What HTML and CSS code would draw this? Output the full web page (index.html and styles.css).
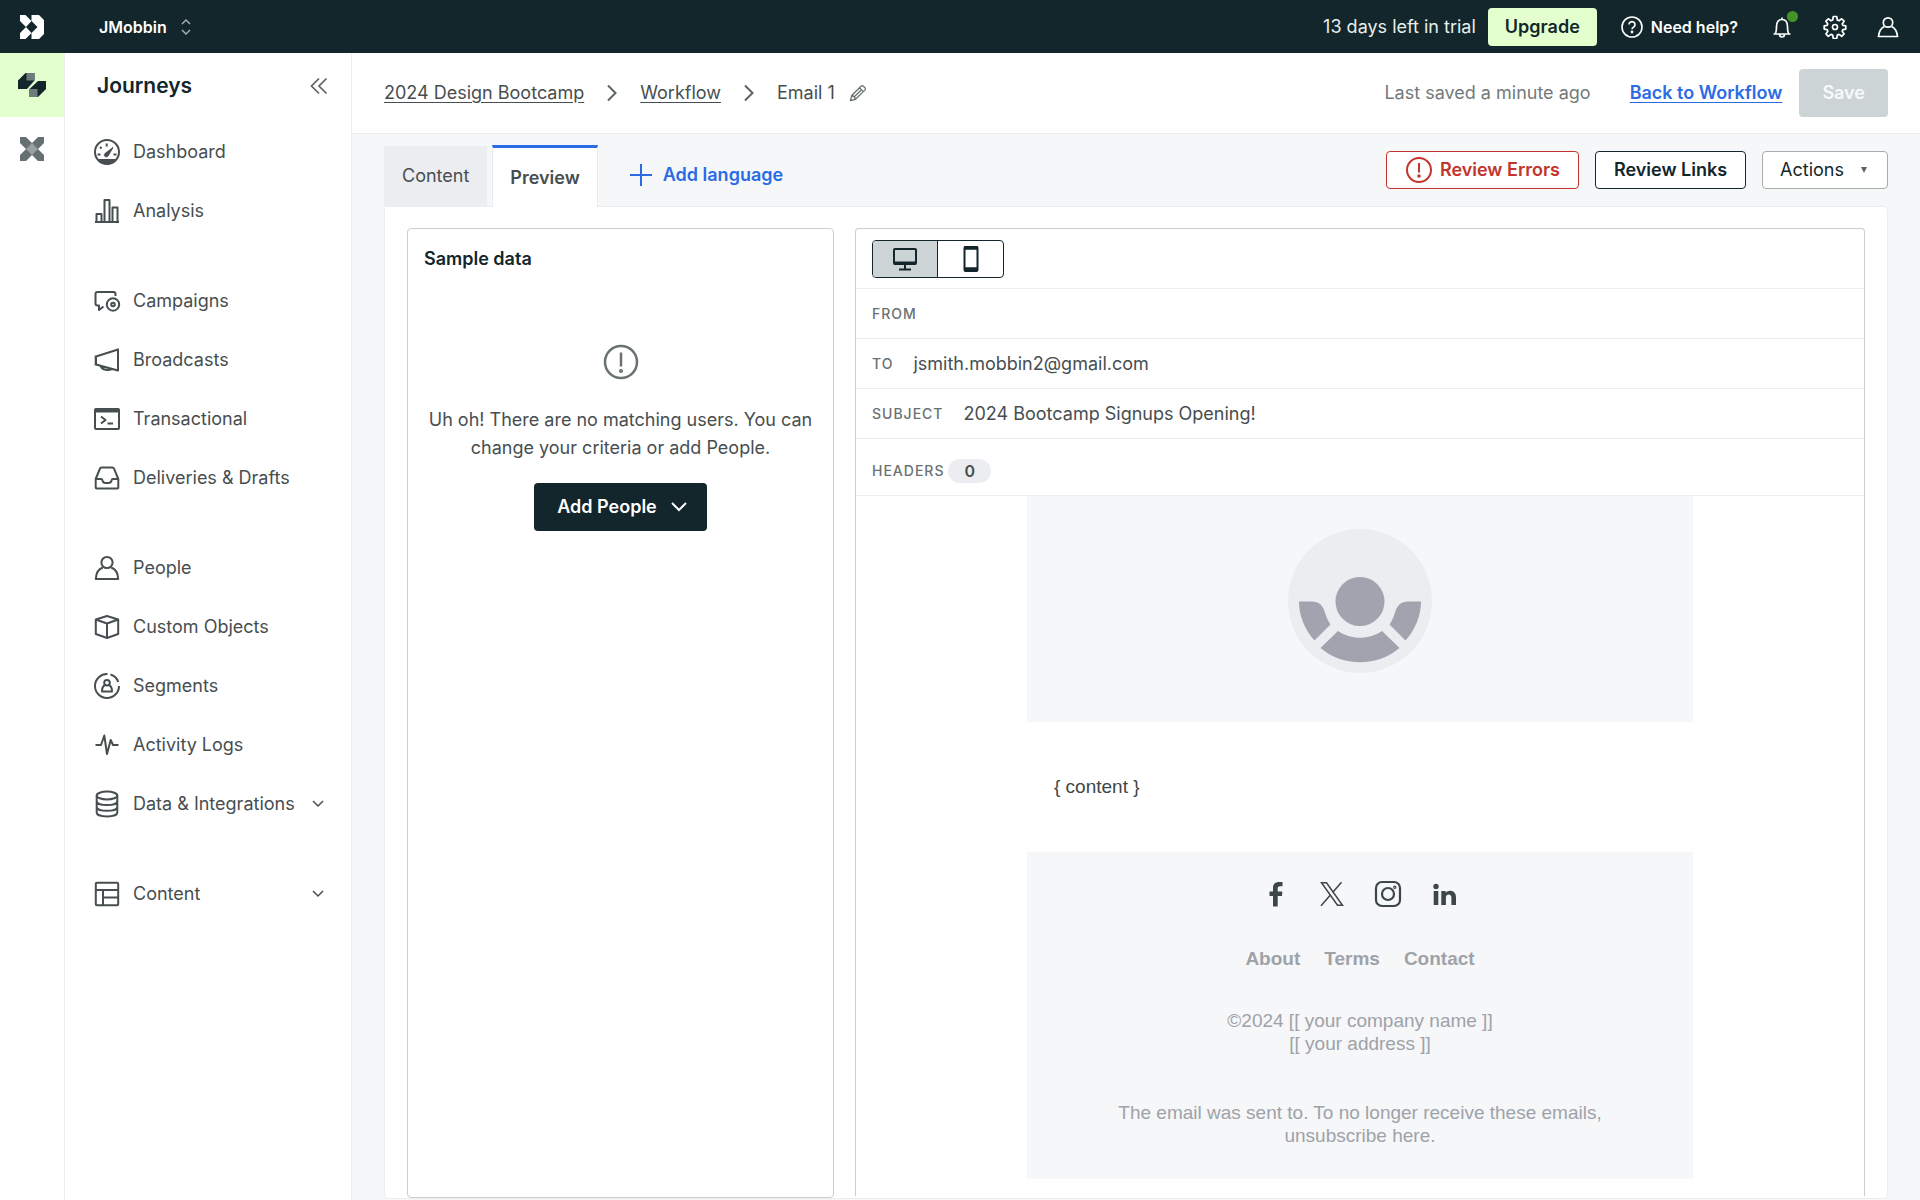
FILE: index.html
```html
<!DOCTYPE html>
<html lang="en">
<head>
    <meta charset="UTF-8">
    <meta name="viewport" content="width=device-width, initial-scale=1.0">
    <title>Email 1 - Preview</title>
    <link rel="stylesheet" href="styles.css">
</head>
<body>
    <header class="topbar">
        <a class="brand" href="#" aria-label="Home">
            <svg width="26" height="26" viewBox="0 0 26 26" fill="#fff">
                <path d="M1 1h5.500l6 6-5.500 6L1 7zM1 25h5.500l6-6-5.500-6L1 19zM12.500 1H20l5 5v14l-5 5h-7.500v-6l6-6-6-6z"/>
            </svg>
        </a>
        <button class="workspace">JMobbin
            <svg width="10" height="18" viewBox="0 0 10 18" fill="none" stroke="#a9b4b5" stroke-width="1.4"><path d="M1 6l4-4 4 4M1 12l4 4 4-4"/></svg>
        </button>
        <span class="trial">13 days left in trial</span>
        <button class="upgrade">Upgrade</button>
        <button class="help">
            <svg width="24" height="24" viewBox="0 0 24 24" fill="none" stroke="#fff" stroke-width="1.6"><circle cx="12" cy="12" r="10"/><path d="M9 9.600a3 3 0 1 1 4.500 2.600c-1.100.6-1.500 1-1.500 2"/><circle cx="12" cy="17" r=".6" fill="#fff"/></svg>
            Need help?
        </button>
        <button class="icon-btn bell" aria-label="Notifications">
            <svg width="24" height="24" viewBox="0 0 24 24" fill="none" stroke="#fff" stroke-width="1.7" stroke-linejoin="round"><path d="M3.500 19h17M5 19c1.200-1.500 1.500-3 1.500-7.500C6.500 7 8.500 4.500 12 4.500s5.500 2.500 5.500 7c0 4.500.3 6 1.500 7.500M12 4.500V2.500M9.500 19c0 4 5 4 5 0"/></svg>
            <span class="dot"></span>
        </button>
        <button class="icon-btn" aria-label="Settings">
            <svg width="24" height="24" viewBox="0 0 24 24" fill="none" stroke="#fff" stroke-width="1.7" stroke-linejoin="round"><circle cx="12" cy="12" r="2.500"/><path d="M10.300 1.500h3.400l.6 3.500 1.700.7 2.700-1.900 2.400 2.400-1.900 2.700.7 1.500 2.900.5v3.200l-2.900.6-.7 1.500 1.900 2.700-2.400 2.400-2.700-1.900-1.700.7-.6 3.400h-3.400l-.6-3.400-1.700-.7-2.700 1.900-2.400-2.400 1.900-2.700-.7-1.500-2.900-.6v-3.200l2.900-.5.7-1.500-1.900-2.700 2.400-2.400L8 5.700 9.700 5z"/></svg>
        </button>
        <button class="icon-btn" aria-label="Account">
            <svg width="24" height="24" viewBox="0 0 24 24" fill="none" stroke="#fff" stroke-width="1.7" stroke-linejoin="round"><circle cx="12" cy="7.500" r="4.700"/><path d="M8.500 11.500C5 13 3 16.500 2.500 21.500h19c-.5-5-2.500-8.500-6-10"/></svg>
        </button>
    </header>

    <div class="layout">
        <nav class="rail" aria-label="Products">
            <a class="rail-item active" href="#" aria-label="Journeys">
                <svg width="28" height="26" viewBox="0 0 28 26"><path fill="#12262b" d="M7.500 1h9v7.500L9 17H0V8.500zM20 9h8v8l-8 8h-9v-7.500z"/><path fill="#6f7c7c" d="M8.500 1h8v7.500h-8zM11 17h8.500v8H11z"/></svg>
            </a>
            <a class="rail-item" href="#" aria-label="Data Pipelines">
                <svg width="26" height="26" viewBox="0 0 26 26"><path fill="#667070" d="M1 1h6l6 6 6-6h6v6l-6 6 6 6v6h-6l-6-6-6 6H1v-6l6-6-6-6z"/><path fill="#98a0a0" d="M13 7l6 6-6 6-6-6z"/></svg>
            </a>
        </nav>

        <aside class="sidebar">
            <div class="sidebar-head">
                <h1>Journeys</h1>
                <button class="collapse" aria-label="Collapse menu">
                    <svg width="18" height="18" viewBox="0 0 18 18" fill="none" stroke="#5c6465" stroke-width="1.7"><path d="M9 1.500L1.500 9 9 16.500M16.500 1.500L9 9l7.500 7.500"/></svg>
                </button>
            </div>
            <ul class="menu">
                <li><a href="#">
                    <svg class="ico" viewBox="0 0 28 28"><circle cx="14" cy="14" r="12"/><path class="solid" d="M4.500 21.500h19c-4.500 6-14.500 6-19 0z"/><path class="solid" d="M12 15.500l8-6-5 8.500c-2 2-5 0-3-2.500z"/><path d="M13.700 5.500v3M7 9l1.500 1.500M4.500 16.500h3M20.500 16.500h3"/></svg>
                    Dashboard</a></li>
                <li><a href="#">
                    <svg class="ico" viewBox="0 0 28 28"><path d="M2 25h24M3.500 25v-8h5v8M11.500 25V3h5v22M19.500 25V10.500h5V25"/></svg>
                    Analysis</a></li>
            </ul>
            <ul class="menu">
                <li><a href="#">
                    <svg class="ico" viewBox="0 0 28 28"><path d="M22.500 9V7a2 2 0 0 0-2-2h-16a2 2 0 0 0-2 2v9.500a2 2 0 0 0 2 2h1.500V23l4.500-3.500"/><circle cx="20" cy="17.500" r="6.200"/><circle cx="20" cy="17.500" r="1.800"/></svg>
                    Campaigns</a></li>
                <li><a href="#">
                    <svg class="ico" viewBox="0 0 28 28"><path d="M3 10.500L25 3.500v21L3 18.500zM7.500 20c2 4.500 8 4.500 11.500 3M2.700 9.500v10M25 2.500v22.500"/></svg>
                    Broadcasts</a></li>
                <li><a href="#">
                    <svg class="ico" viewBox="0 0 28 28"><rect x="2" y="4" width="24" height="20" rx="1"/><path class="solid" d="M2 4h24v3H2z"/><path d="M8 11.500l4.500 3.500L8 18.500M14.500 18.500H20"/></svg>
                    Transactional</a></li>
                <li><a href="#">
                    <svg class="ico" viewBox="0 0 28 28"><path d="M2.700 15L7 4.500q.4-1 1.500-1h11q1.100 0 1.500 1L25.300 15v8.500q0 1-1 1H3.700q-1 0-1-1zM2.700 15H8q1.200 0 1.500 1.500.6 2.500 3 2.500h3q2.400 0 3-2.500.3-1.500 1.500-1.500h5.300"/></svg>
                    Deliveries &amp; Drafts</a></li>
            </ul>
            <ul class="menu">
                <li><a href="#">
                    <svg class="ico" viewBox="0 0 28 28"><circle cx="14" cy="8.500" r="5.600"/><path d="M9.800 13.500C5.500 15 3 19 2.800 25h22.400c-.2-6-2.700-10-7-11.500"/></svg>
                    People</a></li>
                <li><a href="#">
                    <svg class="ico" viewBox="0 0 28 28"><path d="M14 3l11.200 3.500V21L14 25 2.800 21V6.500zM2.800 6.500L14 10.500l11.200-4M14 10.500V25"/></svg>
                    Custom Objects</a></li>
                <li><a href="#">
                    <svg class="ico" viewBox="0 0 28 28"><path d="M14.500 2A12 12 0 1 0 26 14M17.500 2.500A12 12 0 0 1 25.300 10"/><circle cx="14" cy="10.800" r="2.800"/><path d="M12 13c-2 1-3 3-3 6.500h10c0-3.500-1-5.500-3-6.500"/></svg>
                    Segments</a></li>
                <li><a href="#">
                    <svg class="ico" viewBox="0 0 28 28"><path d="M2.500 14H8l3.300-9.500L14 23l3.700-14 2.300 5h5.500"/></svg>
                    Activity Logs</a></li>
                <li><a href="#">
                    <svg class="ico" viewBox="0 0 28 28"><ellipse cx="14" cy="5.500" rx="10.300" ry="3.900"/><path d="M3.700 5.500v17c0 5.200 20.600 5.200 20.600 0v-17M3.700 11.200c0 5.200 20.600 5.200 20.600 0M3.700 16.900c0 5.200 20.600 5.200 20.600 0"/></svg>
                    Data &amp; Integrations
                    <svg class="chev" viewBox="0 0 12 8" stroke-width="1.5"><path d="M1 1l5 5 5-5"/></svg></a></li>
            </ul>
            <ul class="menu">
                <li><a href="#">
                    <svg class="ico" viewBox="0 0 28 28"><rect x="2.800" y="2.800" width="22.400" height="22.400" rx="1"/><path d="M2.800 10h22.400M10 10v15M10 17.500h15"/></svg>
                    Content
                    <svg class="chev" viewBox="0 0 12 8" stroke-width="1.5"><path d="M1 1l5 5 5-5"/></svg></a></li>
            </ul>
        </aside>

        <main class="main">
            <div class="page-head">
                <nav class="crumbs" aria-label="Breadcrumb">
                    <a href="#">2024 Design Bootcamp</a>
                    <svg width="10" height="18" viewBox="0 0 10 18"><path d="M1 1.500L8.500 9 1 16.500"/></svg>
                    <a href="#">Workflow</a>
                    <svg width="10" height="18" viewBox="0 0 10 18"><path d="M1 1.500L8.500 9 1 16.500"/></svg>
                    <span>Email 1</span>
                </nav>
                <button class="edit" aria-label="Rename">
                    <svg width="18" height="18" viewBox="0 0 18 18" fill="none" stroke="#6a7172" stroke-width="1.3" stroke-linejoin="round"><path d="M1.500 16.500l1.200-5L12 2.200q1.200-1 2.400 0l1.500 1.500q1.100 1.200 0 2.400L6.500 15.300zM10.500 3.800l3.800 3.800M2.700 11.500q2.800.5 3.800 3.800M5.500 12.500l6.500-6.300"/></svg>
                </button>
                <span class="saved">Last saved a minute ago</span>
                <a class="back" href="#">Back to Workflow</a>
                <button class="save" disabled>Save</button>
            </div>

            <div class="workarea">
                <div class="tabs-row">
                    <button class="tab">Content</button>
                    <button class="tab current">Preview</button>
                    <button class="add-lang">
                        <svg width="22" height="22" viewBox="0 0 22 22" stroke="#2b6be6" stroke-width="2"><path d="M11 0v22M0 11h22"/></svg>
                        Add language
                    </button>
                    <div class="actions">
                        <button class="btn btn-error">
                            <svg width="28" height="28" viewBox="0 0 28 28" fill="none" stroke="#c3342c" stroke-width="2"><circle cx="14" cy="14" r="12"/><path d="M14 7v9.500"/><circle cx="14" cy="20" r=".8" fill="#c3342c"/></svg>
                            Review Errors
                        </button>
                        <button class="btn btn-dark">Review Links</button>
                        <button class="btn btn-menu" aria-haspopup="true">Actions
                            <svg width="6" height="6" viewBox="0 0 6 6" fill="#5c6465"><path d="M0 0h6L3 6z"/></svg>
                        </button>
                    </div>
                </div>

                <div class="panel">
                    <section class="sample">
                        <h2>Sample data</h2>
                        <div class="empty">
                            <svg width="36" height="36" viewBox="0 0 36 36" fill="none" stroke="#6a7172" stroke-width="2.500"><circle cx="18" cy="18" r="16"/><path d="M18 8.500v14"/><circle cx="18" cy="27" r=".8" fill="#6a7172"/></svg>
                            <p>Uh oh! There are no matching users. You can change your criteria or add People.</p>
                            <button class="add-people">Add People
                                <svg width="16" height="10" viewBox="0 0 16 10" fill="none" stroke="#fff" stroke-width="2"><path d="M1 1l7 7 7-7"/></svg>
                            </button>
                        </div>
                    </section>

                    <section class="preview">
                        <div class="row devices">
                            <div class="toggle">
                                <button class="on" aria-label="Desktop">
                                    <svg width="24" height="24" viewBox="0 0 24 24" fill="none" stroke="#12262b" stroke-width="2"><rect x="1" y="2" width="22" height="15" rx="1"/><path d="M1 16h22" stroke-width="3"/><path d="M12 17v5M6 22.500h12"/></svg>
                                </button>
                                <button aria-label="Mobile">
                                    <svg width="16" height="26" viewBox="0 0 16 26" fill="none" stroke="#12262b" stroke-width="2"><rect x="1.500" y="1" width="13" height="24" rx="1"/><path d="M1 2h14M1 23h14" stroke-width="3.500"/></svg>
                                </button>
                            </div>
                        </div>
                        <div class="row"><span class="label">From</span></div>
                        <div class="row"><span class="label">To</span><span>jsmith.mobbin2@gmail.com</span></div>
                        <div class="row"><span class="label">Subject</span><span>2024 Bootcamp Signups Opening!</span></div>
                        <div class="row headers"><span class="label">Headers</span><span class="badge">0</span></div>

                        <article class="email">
                            <div class="email-logo">
                                <svg width="144" height="144" viewBox="0 0 144 144">
                                    <circle cx="72" cy="72" r="72" fill="#ecedf1"/>
                                    <g fill="#a2a3af">
                                        <circle cx="72" cy="72.500" r="24.500"/>
                                        <path d="M11 72.500h13c7 0 10 3.500 12.500 9.500 1.500 5 3 9 6 13.500L26.500 111.500C17 101 11 87 11 72.500z"/>
                                        <path d="M133 72.500h-13c-7 0-10 3.500-12.500 9.500-1.500 5-3 9-6 13.500l16 16C127 101 133 87 133 72.500z"/>
                                        <path d="M50 102c13 9 31 9 44 0l17.500 17c-22 19-57 19-79 0z"/>
                                    </g>
                                </svg>
                            </div>
                            <p class="email-body">{ content }</p>
                            <footer class="email-foot">
                                <div class="social">
                                    <a href="#" aria-label="Facebook"><svg width="28" height="28" viewBox="0 0 28 28" fill="#3d4648"><path d="M11 26.500V16H7.500v-4.500H11V8c0-4 2.300-6 6-6h3.500v4.300H18c-2 0-2.300.9-2.300 2.500v2.700h4.600L20 16h-4.300v10.500z"/></svg></a>
                                    <a href="#" aria-label="X"><svg width="28" height="28" viewBox="0 0 28 28" fill="none" stroke="#3d4648" stroke-width="1.500"><path d="M3.500 2.700h5l16 22.600h-5zM23.500 2.200L15 12M12 15.500l-9 10.300"/></svg></a>
                                    <a href="#" aria-label="Instagram"><svg width="28" height="28" viewBox="0 0 28 28" fill="none" stroke="#3d4648" stroke-width="2.200"><rect x="2" y="2" width="24" height="24" rx="6"/><circle cx="14" cy="14" r="6"/><circle cx="20.800" cy="7.200" r=".6"/></svg></a>
                                    <a href="#" aria-label="LinkedIn"><svg width="28" height="28" viewBox="0 0 28 28" fill="#3d4648"><circle cx="6" cy="6.500" r="2.700"/><path d="M3.700 11h4.600v14H3.700zM11.300 11h4.400v2c2.500-4 10.300-3 10.300 4v8h-4.600v-7.500c0-4-5.500-4-5.500 0V25h-4.600z"/></svg></a>
                                </div>
                                <div class="email-links">
                                    <a href="#">About</a>
                                    <a href="#">Terms</a>
                                    <a href="#">Contact</a>
                                </div>
                                <p>©2024 [[ your company name ]]<br>[[ your address ]]</p>
                                <p class="unsub">The email was sent to. To no longer receive these emails,<br>unsubscribe here.</p>
                            </footer>
                        </article>
                    </section>
                </div>
            </div>
        </main>
    </div>
</body>
</html>
```

FILE: styles.css
```css
* {
    box-sizing: border-box;
}
body {
    margin: 0;
    min-height: 100vh;
    display: flex;
    flex-direction: column;
    font-family: Inter, "Liberation Sans", sans-serif;
    font-size: 18px;
    line-height: 28px;
    color: #474e50;
    background: #fff;
}
h1, h2, p, ul {
    margin: 0;
    padding: 0;
}
svg {
    display: block;
    flex: none;
}
button {
    font: inherit;
    color: inherit;
    background: none;
    border: 0;
    padding: 0;
    display: flex;
    align-items: center;
    justify-content: center;
    white-space: nowrap;
    cursor: pointer;
}

/* top bar */
.topbar {
    display: flex;
    align-items: center;
    height: 53px;
    padding-right: 20px;
    background: #12262b;
    color: #fff;
}
.brand {
    width: 64px;
    display: flex;
    justify-content: center;
}
.workspace {
    margin-left: 35px;
    gap: 14px;
    font-size: 16px;
    font-weight: 600;
}
.trial {
    margin-left: auto;
    color: #e9eded;
}
.upgrade {
    height: 38px;
    margin-left: 12px;
    padding: 0 17px;
    border-radius: 4px;
    background: #e4ffce;
    color: #12262b;
    font-weight: 600;
}
.help {
    margin-left: 23px;
    gap: 7px;
    font-size: 16px;
    font-weight: 600;
}
.icon-btn {
    position: relative;
    width: 24px;
    margin-left: 29px;
}
.bell {
    margin-left: 32px;
}
.dot {
    position: absolute;
    top: -4px;
    right: -4px;
    width: 11px;
    height: 11px;
    border-radius: 50%;
    background: #43952a;
}

/* left navigation */
.layout {
    flex: 1;
    display: flex;
}
.rail {
    width: 65px;
    border-right: 1px solid #ecedf1;
}
.rail-item {
    height: 64px;
    display: flex;
    align-items: center;
    justify-content: center;
}
.rail-item.active {
    background: #e4ffce;
}
.sidebar {
    width: 287px;
    border-right: 1px solid #ecedf1;
}
.sidebar-head {
    display: flex;
    align-items: center;
    justify-content: space-between;
    height: 66px;
    padding: 0 23px 0 32px;
}
.sidebar-head h1 {
    font-size: 21px;
    font-weight: 600;
    color: #12262b;
}
.menu {
    list-style: none;
    padding: 3px 27px 28px 28px;
}
.menu a {
    display: flex;
    align-items: center;
    gap: 12px;
    height: 59px;
    color: #474e50;
    text-decoration: none;
    white-space: nowrap;
}
.ico {
    width: 28px;
    height: 28px;
    fill: none;
    stroke: #474e50;
    stroke-width: 2;
    stroke-linejoin: round;
}
.ico .solid {
    fill: #474e50;
    stroke-width: 1;
}
.chev {
    width: 12px;
    height: 8px;
    margin-left: auto;
    fill: none;
    stroke: #474e50;
}

/* page header */
.main {
    flex: 1;
    display: flex;
    flex-direction: column;
    min-width: 0;
}
.page-head {
    display: flex;
    align-items: center;
    height: 81px;
    padding: 0 32px;
    border-bottom: 1px solid #ecedf1;
}
.crumbs {
    display: flex;
    align-items: center;
    gap: 23px;
}
.crumbs a {
    color: inherit;
    text-underline-offset: 3px;
}
.crumbs svg {
    fill: none;
    stroke: #5c6465;
    stroke-width: 2;
}
.edit {
    margin-left: 14px;
}
.saved {
    margin-left: auto;
    color: #737a7b;
}
.back {
    margin: 0 17px 0 39px;
    color: #2b6be6;
    font-weight: 600;
    text-underline-offset: 3px;
}
.save {
    height: 48px;
    padding: 0 23px;
    border-radius: 4px;
    background: #cdd4d5;
    color: #f8fafa;
    font-weight: 600;
}

/* tabs */
.workarea {
    flex: 1;
    display: flex;
    flex-direction: column;
    padding: 11px 32px 1px;
    background: #f6f7f9;
}
.tabs-row {
    display: flex;
    align-items: flex-end;
}
.tab {
    height: 60px;
    padding: 0 18px;
    background: #ecedf1;
}
.tab.current {
    height: 62px;
    margin: 0 0 -1px 5px;
    padding: 0 17px;
    border: 1px solid #e8eaed;
    border-top: 3px solid #2b6be6;
    border-bottom: 0;
    background: #fff;
    font-weight: 600;
    z-index: 1;
}
.add-lang {
    gap: 11px;
    height: 60px;
    margin-left: 32px;
    padding-bottom: 2px;
    color: #2b6be6;
    font-weight: 600;
}
.actions {
    display: flex;
    gap: 16px;
    margin: 0 0 17px auto;
}
.btn {
    height: 38px;
    padding: 0 18px;
    border: 1px solid #12262b;
    border-radius: 4px;
    background: #fff;
    color: #12262b;
}
.btn-error {
    gap: 7px;
    border-color: #c3342c;
    color: #c3342c;
    font-weight: 600;
}
.btn-dark {
    font-weight: 600;
}
.btn-menu {
    gap: 17px;
    padding: 0 20px 0 17px;
    border-color: #a7adae;
}

/* preview panel */
.panel {
    flex: 1;
    display: flex;
    gap: 21px;
    padding: 21px 22px 0;
    border: 1px solid #ecedf1;
    border-radius: 0 4px 4px 4px;
    background: #fff;
}
.sample {
    flex: 0 0 427px;
    padding: 16px;
    border: 1px solid #c9cfd0;
    border-radius: 4px;
}
.sample h2 {
    font-size: 18px;
    line-height: 28px;
    font-weight: 600;
    color: #12262b;
}
.empty {
    display: flex;
    flex-direction: column;
    align-items: center;
    padding-top: 71px;
    text-align: center;
}
.empty p {
    margin: 26px 0 21px;
}
.add-people {
    gap: 14px;
    height: 48px;
    padding: 0 20px 0 23px;
    border-radius: 4px;
    background: #12262b;
    color: #fff;
    font-weight: 600;
}
.preview {
    flex: 1;
    margin-bottom: 2px;
    border: 1px solid #c9cfd0;
    border-bottom: 0;
    border-radius: 4px 4px 0 0;
}
.row {
    display: flex;
    align-items: center;
    gap: 20px;
    padding: 0 16px;
    min-height: 50px;
    border-bottom: 1px solid #ecedf1;
}
.devices {
    min-height: 60px;
}
.headers {
    gap: 4px;
    padding-top: 8px;
    min-height: 57px;
}
.label {
    font-size: 14px;
    font-weight: 500;
    letter-spacing: 1px;
    text-transform: uppercase;
    color: #6a7172;
}
.badge {
    padding: 0 16px;
    border-radius: 12px;
    background: #ecedf1;
    font-size: 16px;
    line-height: 24px;
    font-weight: 600;
}
.toggle {
    display: flex;
    height: 38px;
    border: 1px solid #12262b;
    border-radius: 4px;
    overflow: hidden;
}
.toggle button {
    width: 65px;
}
.toggle .on {
    border-right: 1px solid #12262b;
    background: #cdd4d5;
}

/* rendered email */
.email {
    max-width: 666px;
    margin: 0 auto;
    font-family: "Liberation Sans", Arial, sans-serif;
    font-size: 19px;
    line-height: 23px;
    color: #9fa2a8;
}
.email-logo {
    display: flex;
    justify-content: center;
    padding: 33px 0 49px;
    background: #f5f7f9;
}
.email-body {
    padding: 53px 27px 54px;
    color: #3d4648;
}
.email-foot {
    padding: 28px 24px 32px;
    background: #f5f7f9;
    text-align: center;
}
.social {
    display: flex;
    justify-content: center;
    gap: 28px;
}
.email-links {
    display: flex;
    justify-content: center;
    gap: 24px;
    margin: 39px 0;
}
.email-links a {
    color: inherit;
    font-weight: 700;
    text-decoration: none;
}
.unsub {
    margin-top: 46px;
}
```
